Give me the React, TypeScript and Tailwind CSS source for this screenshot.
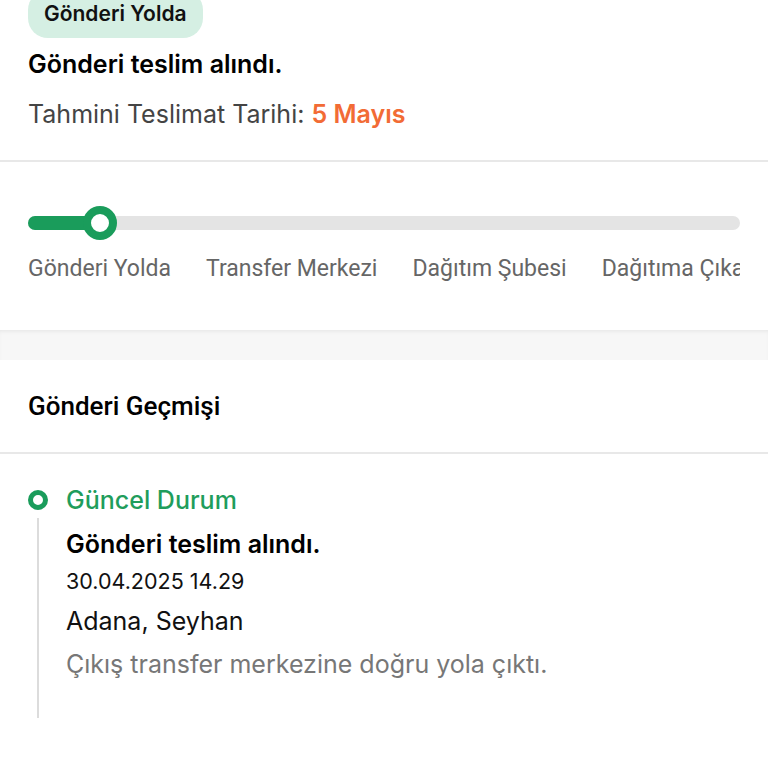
const steps = ['Gönderi Yolda', 'Transfer Merkezi', 'Dağıtım Şubesi', 'Dağıtıma Çıkarıldı'];

export default function App() {
  return (
    <div className="w-[768px] h-[768px] overflow-hidden bg-white font-['Inter',sans-serif]">
      {/* summary */}
      <div className="px-[28px] pb-[31px]">
        <div className="-mt-[10px] inline-flex h-[48px] items-center rounded-[20px] bg-[#d5efe3] px-[16px] text-[21px] font-semibold text-[#111]">
          Gönderi Yolda
        </div>
        <div className="mt-[11px] text-[25px] leading-[30px] font-semibold text-black">Gönderi teslim alındı.</div>
        <div className="mt-[20px] text-[25px] leading-[30px] text-[#444]">
          Tahmini Teslimat Tarihi: <span className="font-semibold text-[#f26b35]">5 Mayıs</span>
        </div>
      </div>
      <div className="h-[2px] bg-[#e8e8e8]" />

      {/* progress */}
      <div className="px-[28px] pt-[54px] pb-[47px]">
        <div className="relative h-[14px] rounded-full bg-[#e4e4e4]">
          <div className="absolute left-0 top-0 h-[14px] w-[72px] rounded-full bg-[#1a9c5b]" />
          <div className="absolute left-[55px] top-[-10px] h-[34px] w-[34px] rounded-full border-[8px] border-[#1a9c5b] bg-white" />
        </div>
        <div className="mt-[25px] flex gap-[35px] overflow-hidden whitespace-nowrap font-['Roboto',sans-serif] text-[23px] leading-[28px] text-[#666]">
          {steps.map((s) => (
            <span key={s} className="shrink-0">{s}</span>
          ))}
        </div>
      </div>

      <div className="h-[30px] bg-[#f7f7f7] shadow-[inset_0_3px_4px_-2px_rgba(0,0,0,0.08)]" />

      {/* history */}
      <div className="flex h-[92px] items-center px-[28px] font-['Roboto',sans-serif] text-[26px] font-medium text-black">
        Gönderi Geçmişi
      </div>
      <div className="h-[2px] bg-[#e8e8e8]" />

      <div className="px-[28px] pt-[31px]">
        <div className="flex h-[30px] items-center gap-[18px]">
          <div className="h-[20px] w-[20px] rounded-full border-[5px] border-[#1a9c5b] bg-white" />
          <div className="text-[25px] leading-[30px] font-medium text-[#1f9d5c]">Güncel Durum</div>
        </div>
        <div className="ml-[9px] mt-[3px] flex">
          <div className="h-[200px] w-[2px] bg-[#dcdcdc]" />
          <div className="ml-[27px] flex flex-col">
            <div className="mt-[11px] text-[25px] leading-[30px] font-semibold text-black">Gönderi teslim alındı.</div>
            <div className="mt-[9px] text-[21.5px] leading-[26px] text-[#111]">30.04.2025 14.29</div>
            <div className="mt-[12px] text-[25px] leading-[30px] text-[#111]">Adana, Seyhan</div>
            <div className="mt-[13px] text-[25px] leading-[30px] text-[#777]">Çıkış transfer merkezine doğru yola çıktı.</div>
          </div>
        </div>
      </div>
    </div>
  );
}
